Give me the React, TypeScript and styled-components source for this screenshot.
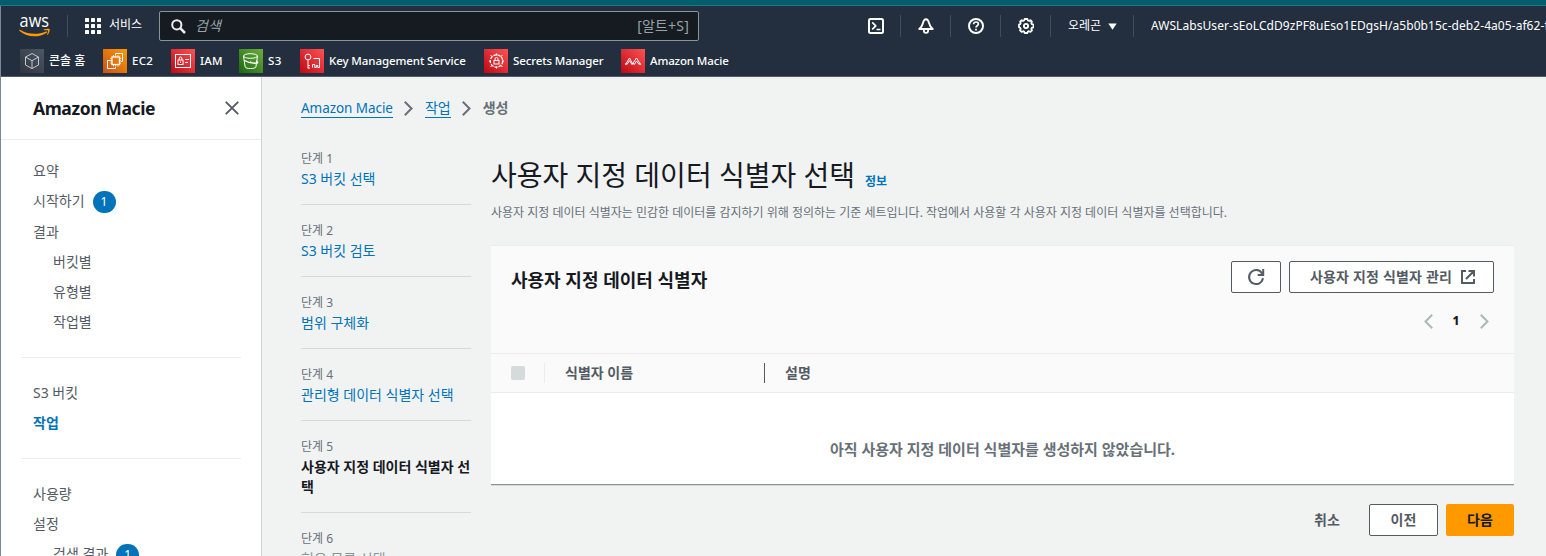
import React from "react";
import styled, { createGlobalStyle } from "styled-components";

const Global = createGlobalStyle`
  * { box-sizing: border-box; }
  html, body { margin: 0; padding: 0; }
  body {
    font-family: "Noto Sans", "Noto Sans CJK KR", sans-serif;
    font-size: 14px;
    line-height: 20px;
    color: #16191f;
    background: #f2f3f3;
    overflow: hidden;
  }
  svg { display: block; flex: none; }
`;

const Page = styled.div`
  width: 1546px;
  height: 556px;
  overflow: hidden;
  display: flex;
  flex-direction: column;
  background: #f1f3f3;
`;
const TopStrip = styled.div`
  flex: none;
  height: 6px;
  background: #055d6e;
  border-bottom: 1px solid #1b7885;
`;
const Frame = styled.div`
  flex: 1;
  min-height: 0;
  display: flex;
  flex-direction: column;
  border-left: 1px solid #7d8998;
`;

const Header = styled.header`
  flex: none;
  height: 71px;
  background: #232f3e;
  border-bottom: 1px solid #545b68;
  color: #fff;
`;
const NavRow = styled.div`
  display: flex;
  align-items: center;
  height: 40px;
  padding-left: 18px;
`;
const VRule = styled.span<{ $l?: number; $r?: number }>`
  flex: none;
  width: 1px;
  height: 22px;
  margin-left: ${(p) => p.$l ?? 0}px;
  margin-right: ${(p) => p.$r ?? 0}px;
  background: #414d5c;
`;
const Services = styled.span`
  display: flex;
  align-items: center;
  gap: 8px;
  width: 74px;
  font-size: 12px;
  white-space: nowrap;
  line-height: 18px;
`;
const ServicesText = styled.span`
  padding-bottom: 2px;
`;
const Search = styled.div`
  flex: none;
  display: flex;
  align-items: center;
  width: 540px;
  height: 30px;
  padding: 0 9px 0 11px;
  border: 1px solid #879596;
  border-radius: 2px;
  background: #161a21;
  color: #95a5a6;
`;
const Placeholder = styled.span`
  flex: 1;
  margin-left: 9px;
  font-style: italic;
`;
const Shortcut = styled.span`
  letter-spacing: 0.2px;
`;
const Tools = styled.div`
  flex: none;
  display: flex;
  align-items: center;
  margin-left: 152px;
`;
const Tool = styled.span`
  display: flex;
  justify-content: center;
  width: 49px;
`;
const Region = styled.span`
  display: flex;
  align-items: center;
  gap: 7px;
  margin-left: 17px;
  width: 65px;
  font-size: 12px;
  white-space: nowrap;
`;
const Account = styled.span`
  flex: 1;
  min-width: 0;
  overflow: hidden;
  white-space: nowrap;
  font-size: 12px;
  letter-spacing: 0.06px;
`;
const Favorites = styled.div`
  display: flex;
  align-items: center;
  height: 30px;
  padding-left: 19px;
`;
const Favorite = styled.div<{ $w: number; $ls?: number; $size?: number }>`
  flex: none;
  display: flex;
  align-items: center;
  gap: 5px;
  width: ${(p) => p.$w}px;
  font-size: ${(p) => p.$size ?? 11.5}px;
  font-weight: 500;
  white-space: nowrap;
  letter-spacing: ${(p) => p.$ls ?? 0}px;
`;

const Body = styled.div`
  flex: 1;
  min-height: 0;
  display: flex;
`;
const Sidebar = styled.aside`
  flex: none;
  width: 261px;
  background: #fff;
  border-right: 1px solid #d0d4d5;
  overflow: hidden;
`;
const SideHead = styled.div`
  display: flex;
  align-items: center;
  justify-content: space-between;
  height: 63px;
  padding: 0 22px 0 32px;
  border-bottom: 1px solid #eaeded;
  font-size: 17.5px;
  font-weight: 700;
`;
const SideTitle = styled.span`
  letter-spacing: -0.4px;
`;
const SideGroup = styled.div`
  margin: 0 20px;
  padding: 20px 0 20px 12px;
  border-bottom: 1px solid #eaeded;
  ${SideHead} + & { padding-top: 16px; }
`;
const SideItem = styled.div<{ $nested?: boolean; $active?: boolean; $badged?: boolean }>`
  display: flex;
  align-items: center;
  gap: 8px;
  height: 30px;
  margin-bottom: ${(p) => (p.$badged ? 1 : 0)}px;
  padding-left: ${(p) => (p.$nested ? 20 : 0)}px;
  color: ${(p) => (p.$active ? "#0073bb" : "#545b64")};
  font-weight: ${(p) => (p.$active ? 700 : 400)};
`;
const Badge = styled.span`
  display: flex;
  align-items: center;
  justify-content: center;
  width: 23px;
  height: 22px;
  margin-top: 2px;
  border-radius: 11px;
  background: #0073bb;
  color: #fff;
  font-size: 12px;
`;

const Content = styled.main`
  flex: 1;
  min-width: 0;
  padding: 21px 32px 0 39px;
`;
const Crumbs = styled.nav`
  display: flex;
  align-items: center;
  height: 20px;
`;
const CrumbLink = styled.a<{ $latin?: boolean }>`
  color: #0073bb;
  padding-top: ${(p) => (p.$latin ? 2 : 0)}px;
  line-height: ${(p) => (p.$latin ? 17 : 19)}px;
  border-bottom: 1px solid #0073bb;
  font-size: ${(p) => (p.$latin ? 13.5 : 14)}px;
  letter-spacing: ${(p) => (p.$latin ? -0.06 : 0)}px;
`;
const CrumbSep = styled.span`
  display: flex;
  justify-content: center;
  width: 32px;
`;
const CrumbCurrent = styled.span`
  color: #687078;
  font-weight: 700;
`;
const Columns = styled.div`
  display: flex;
  gap: 20px;
  margin-top: 15px;
`;
const Steps = styled.div`
  flex: none;
  width: 170px;
`;
const Step = styled.div`
  padding: 16px 0 15px;
  border-bottom: 1px solid #d5dbdb;
`;
const StepLabel = styled.div`
  font-size: 12px;
  line-height: 20px;
  color: #687078;
`;
const StepName = styled.div<{ $state: "link" | "active" | "disabled" }>`
  line-height: 20px;
  word-break: break-all;
  color: ${(p) => ({ link: "#0073bb", active: "#16191f", disabled: "#879596" })[p.$state]};
  font-weight: ${(p) => (p.$state === "active" ? 700 : 400)};
`;
const Wizard = styled.section`
  flex: 1;
  min-width: 0;
`;
const TitleRow = styled.div`
  display: flex;
  align-items: baseline;
  gap: 10px;
  margin-top: 24px;
  height: 36px;
`;
const Title = styled.h1`
  margin: 0;
  font-size: 28px;
  font-weight: 400;
  line-height: 36px;
`;
const Info = styled.a`
  font-size: 12px;
  font-weight: 700;
  color: #0073bb;
`;
const Description = styled.p`
  margin: 10px 0 22px;
  font-size: 12px;
  line-height: 20px;
  color: #687078;
  white-space: nowrap;
`;
const Panel = styled.div`
  height: 240px;
  display: flex;
  flex-direction: column;
  background: #fff;
  border-top: 1px solid #eaeded;
  border-bottom: 1px solid #879596;
  box-shadow: 0 1px 0 #d5dbdb;
`;
const PanelHead = styled.div`
  flex: none;
  height: 107px;
  padding: 15px 20px 0;
  background: #fafafa;
`;
const PanelTop = styled.div`
  display: flex;
  align-items: center;
  gap: 8px;
  height: 32px;
`;
const PanelTitle = styled.h2`
  flex: 1;
  margin: 0;
  padding-top: 6px;
  font-size: 18px;
  line-height: 22px;
  font-weight: 700;
`;
const Button = styled.button<{ $w: number; $kind?: "normal" | "primary" | "link" }>`
  display: flex;
  align-items: center;
  justify-content: center;
  gap: 9px;
  width: ${(p) => p.$w}px;
  height: 32px;
  padding: 0;
  font: inherit;
  font-weight: 700;
  white-space: nowrap;
  border-radius: 2px;
  border: 1px solid ${(p) => (p.$kind === "primary" ? "#ff9900" : p.$kind === "link" ? "transparent" : "#545b64")};
  background: ${(p) => (p.$kind === "primary" ? "#ff9900" : p.$kind === "link" ? "transparent" : "#fff")};
  color: ${(p) => (p.$kind === "primary" ? "#16191f" : "#545b64")};
`;
const ManageButton = styled(Button)`
  padding-left: 2px;
  letter-spacing: 0.18px;
`;
const Pager = styled.div`
  display: flex;
  align-items: center;
  justify-content: flex-end;
  gap: 20px;
  height: 20px;
  margin-top: 18px;
  padding-right: 5.5px;
  font-size: 12px;
  font-weight: 800;
`;
const TableHead = styled.div`
  flex: none;
  display: flex;
  align-items: center;
  height: 40px;
  padding-left: 20px;
  background: #fafafa;
  border-top: 1px solid #eaeded;
  border-bottom: 1px solid #eaeded;
  color: #545b64;
  font-weight: 700;
`;
const Checkbox = styled.span`
  width: 14px;
  height: 14px;
  margin-right: 19px;
  border-radius: 2px;
  background: #d5dbdb;
`;
const HeadCell = styled.span<{ $w?: number; $line: string }>`
  display: flex;
  align-items: center;
  height: 20px;
  width: ${(p) => (p.$w ? p.$w + "px" : "auto")};
  padding-left: 20px;
  border-left: 1px solid ${(p) => p.$line};
`;
const Empty = styled.div`
  flex: 1;
  display: flex;
  align-items: center;
  justify-content: center;
  padding-top: 21px;
  font-size: 15px;
  color: #687078;
  font-weight: 700;
`;
const Actions = styled.div`
  display: flex;
  justify-content: flex-end;
  gap: 8px;
  margin-top: 19px;
`;

const AwsLogo = () => (
  <svg width="32" height="24" viewBox="0 0 32 24" overflow="visible">
    <text x="0.6" y="13.4" textLength="29.4" lengthAdjust="spacingAndGlyphs" fontFamily="Open Sans" fontSize="17.5" fontWeight="500" fill="#fff">aws</text>
    <path d="M.3 16.1c.3-.5.7-.4 1.1-.1 8.2 4.7 17.500 4.900 25.700 1.500 1-.4 1.700.500.700 1.200-7.600 5.200-20 5-27.200-1.700-.2-.3-.4-.6-.3-.9z" fill="#f90" />
    <path d="M24.700 15.600c2-1.200 5.300-1.200 5.900-.5.600.800-.2 4.200-2 5.800-.4.300-.7.100-.5-.3.500-1.300 1.200-3.400.8-4-.5-.6-2.700-.4-3.900-.3-.5.100-.6-.4-.3-.7z" fill="#f90" />
  </svg>
);
const GridIcon = () => (
  <svg width="16" height="16" viewBox="0 0 16 16" fill="#fff">
    {[0, 6, 12].map((y) => [0, 6, 12].map((x) => <rect key={x + "-" + y} x={x} y={y} width="4" height="4" rx=".6" />))}
  </svg>
);
const SearchIcon = () => (
  <svg width="15" height="15" viewBox="0 0 15 15" fill="none" stroke="#eaeded" strokeWidth="2">
    <circle cx="5.800" cy="5.800" r="4.600" />
    <path d="M9.200 9.200l4.800 4.800" strokeWidth="2.500" />
  </svg>
);
const line = { fill: "none", stroke: "#fff", strokeWidth: 2, strokeLinejoin: "round" as const };
const ShellIcon = () => (
  <svg width="16" height="16" viewBox="0 0 16 16" {...line}>
    <rect x="1" y="1" width="14" height="14" rx="1.500" />
    <path d="M4.200 4.400l3.600 3.500-3.600 3.500M8.500 11.500h4" strokeWidth="1.700" />
  </svg>
);
const BellIcon = () => (
  <svg width="16" height="16" viewBox="0 0 16 16" {...line}>
    <path d="M8 1.200C6 1.200 5.400 3 4.900 5.200 4.400 7.500 3.300 9.100 1.300 11h13.400c-2-1.900-3.100-3.500-3.600-5.800C10.600 3 10 1.200 8 1.200z" strokeWidth="1.900" />
    <path d="M5.900 11.200v1.500a2.100 2.100 0 0 0 4.200 0v-1.500" strokeWidth="1.800" />
  </svg>
);
const HelpIcon = () => (
  <svg width="16" height="16" viewBox="0 0 16 16" {...line}>
    <circle cx="8" cy="8" r="7" />
    <path d="M5.600 6.300C5.600 4.700 6.600 4 8 4s2.400.8 2.400 2c0 1.700-2.400 1.700-2.400 3.500M8 10.800v1.700" strokeWidth="1.700" />
  </svg>
);
const GearIcon = () => (
  <svg width="16" height="16" viewBox="0 0 16 16" {...line}>
    <path d="M6.600 1h2.800l.5 1.500 1 .4 1.500-.7 1.500 1.500-.6 1.400.5 1.100 1.700.5v2.600l-1.700.6-.5 1 .7 1.500-1.600 1.500-1.500-.7-1 .4L9.400 15H6.600l-.5-1.400-1-.4-1.500.7L2 12.400l.7-1.500-.5-1L1 9.300V6.700l1.200-.5.5-1.100L2.100 3.700l1.500-1.500 1.500.7 1-.4z" strokeWidth="1.800" />
    <circle cx="8" cy="8" r="2.100" strokeWidth="1.900" />
  </svg>
);
const Caret = () => (
  <svg width="9" height="7" viewBox="0 0 9 7"><path d="M.3.500h8.400L4.500 6.800z" fill="#fff" /></svg>
);

type TileKind = "home" | "ec2" | "iam" | "s3" | "kms" | "secrets" | "macie";
const tileColors: Record<TileKind, [string, string]> = {
  home: ["#30353d", "#4d5766"],
  ec2: ["#c8511b", "#ff9900"],
  iam: ["#bd0816", "#ff5252"],
  s3: ["#1b660f", "#6cae3e"],
  kms: ["#bd0816", "#ff5252"],
  secrets: ["#bd0816", "#ff5252"],
  macie: ["#bd0816", "#ff5252"],
};
const tileArt: Record<TileKind, React.ReactNode> = {
  home: <path d="M12 4.500l6.500 3.500v8L12 19.600 5.500 16V8zM5.500 8l6.500 3.700L18.500 8M12 11.700v7.900" stroke="#c3c8cf" />,
  ec2: (
    <>
      <rect x="9" y="8" width="7.500" height="7.500" strokeWidth="1.300" />
      <path d="M10.500 6v2M12.700 6v2M15 6v2M10.500 15.500v2M12.700 15.500v2M15 15.500v2M7.200 9.500H9M7.200 11.700H9M7.200 14H9M16.500 9.500h1.700M16.500 11.700h1.700M16.500 14h1.700" strokeWidth=".8" />
      <path d="M12.500 6V4.500h7v8H18M7.500 11.500h-3v8h8V18" />
    </>
  ),
  iam: (
    <>
      <rect x="4.500" y="5.500" width="15" height="13" />
      <rect x="7" y="11" width="5" height="4.500" />
      <path d="M8.200 11V9.300a1.300 1.300 0 0 1 2.600 0V11M9.500 12.500v1.500M14 10.500h4M14 13.500h3" />
    </>
  ),
  s3: (
    <>
      <ellipse cx="11.500" cy="7" rx="7" ry="2.300" />
      <path d="M4.500 7l1.700 11c.3 2 10.300 2 10.700 0l1.600-11" />
      <path d="M5.500 11.500c3 1.800 7 3 12 2.700 2 0 1.200-1.500-.1-2.500M11.500 12.300l.5.500" strokeWidth="1.300" />
    </>
  ),
  kms: (
    <>
      <circle cx="8" cy="8" r="2.900" />
      <path d="M8 11v8.500M8 19h2M8 16.500h2M13.500 9.500h6v9h-1.700v-2h-1.500v2h-1.500v-3h-2.300v3" />
    </>
  ),
  secrets: (
    <>
      <circle cx="12.500" cy="12" r="6.200" strokeDasharray="3.200 1" strokeWidth="1.300" />
      <rect x="10" y="11.500" width="5" height="3.500" />
      <path d="M11 11.500V10a1.500 1.500 0 0 1 3 0v1.500M12.500 4.500v2M12.500 17.500v2M5 12h2M18 12h2M6.500 6l2 2M18.500 6l-2 2M6.500 18l2-2M18.500 18l-2-2" />
    </>
  ),
  macie: <path d="M4.500 15.500l4-6.500 3.500 6.500M6 15.500l2.500-3.800L11 15.500l4.500-6.500 4 6.500M13.300 15.500l2.200-3.500 2.500 3.500M4 15h2M18 15h2M12 14.200l1.500 1.300" />,
};
const Tile = ({ kind }: { kind: TileKind }) => (
  <svg width="24" height="24" viewBox="0 0 24 24" fill="none" stroke="#fff" strokeWidth="1">
    <defs>
      <linearGradient id={"tile-" + kind} x1="0" y1="1" x2="1" y2="0">
        <stop offset="0" stopColor={tileColors[kind][0]} />
        <stop offset="1" stopColor={tileColors[kind][1]} />
      </linearGradient>
    </defs>
    <rect width="24" height="24" fill={`url(#tile-${kind})`} stroke="none" />
    {tileArt[kind]}
  </svg>
);

const CloseIcon = () => (
  <svg width="14" height="14" viewBox="0 0 14 14" stroke="#545b64" strokeWidth="1.900"><path d="M.8.800l12.400 12.400M13.200.800L.8 13.200" /></svg>
);
const Chevron = ({ left, color }: { left?: boolean; color: string }) => (
  <svg width="9" height="15" viewBox="0 0 9 15" fill="none" stroke={color} strokeWidth="2">
    <path d={left ? "M8.200.800L1.500 7.500l6.700 6.700" : "M.8.800l6.700 6.700L.8 14.200"} />
  </svg>
);
const RefreshIcon = () => (
  <svg width="18" height="18" viewBox="0 0 18 18" fill="none" stroke="#545b64" strokeWidth="2">
    <path d="M16 10.200A7 7 0 1 1 15 5.300L16 6.800" />
    <path d="M16.200 1v6H10.700" />
  </svg>
);
const ExternalIcon = () => (
  <svg width="14" height="14" viewBox="0 0 14 14" fill="none" stroke="#545b64" strokeWidth="2">
    <path d="M5 1H1v12h12V9M7.500 1H13v5.500M13 1L5 9" />
  </svg>
);

const favorites: { kind: TileKind; label: string; w: number; ls?: number; size?: number }[] = [
  { kind: "home", label: "콘솔 홈", w: 83, size: 12 },
  { kind: "ec2", label: "EC2", w: 68, ls: 0.25 },
  { kind: "iam", label: "IAM", w: 68, ls: 0.25 },
  { kind: "s3", label: "S3", w: 61, ls: 0.5 },
  { kind: "kms", label: "Key Management Service", w: 184, ls: -0.09 },
  { kind: "secrets", label: "Secrets Manager", w: 137, ls: -0.13 },
  { kind: "macie", label: "Amazon Macie", w: 120, ls: -0.13 },
];

const steps: { name: string; state: "link" | "active" | "disabled" }[] = [
  { name: "S3 버킷 선택", state: "link" },
  { name: "S3 버킷 검토", state: "link" },
  { name: "범위 구체화", state: "link" },
  { name: "관리형 데이터 식별자 선택", state: "link" },
  { name: "사용자 지정 데이터 식별자 선택", state: "active" },
  { name: "허용 목록 선택", state: "disabled" },
];

export default function App() {
  return (
    <Page>
      <Global />
      <TopStrip />
      <Frame>
        <Header>
          <NavRow>
            <AwsLogo />
            <VRule $l={16} $r={17} />
            <Services><GridIcon /><ServicesText>서비스</ServicesText></Services>
            <Search>
              <SearchIcon />
              <Placeholder>검색</Placeholder>
              <Shortcut>[알트+S]</Shortcut>
            </Search>
            <Tools>
              <Tool><ShellIcon /></Tool>
              <VRule />
              <Tool><BellIcon /></Tool>
              <VRule />
              <Tool><HelpIcon /></Tool>
              <VRule />
              <Tool><GearIcon /></Tool>
              <VRule />
              <Region>오레곤<Caret /></Region>
              <VRule $r={17} />
            </Tools>
            <Account>AWSLabsUser-sEoLCdD9zPF8uEso1EDgsH/a5b0b15c-deb2-4a05-af62-f</Account>
          </NavRow>
          <Favorites>
            {favorites.map((f) => (
              <Favorite key={f.kind} $w={f.w} $ls={f.ls} $size={f.size}><Tile kind={f.kind} />{f.label}</Favorite>
            ))}
          </Favorites>
        </Header>
        <Body>
          <Sidebar>
            <SideHead><SideTitle>Amazon Macie</SideTitle><CloseIcon /></SideHead>
            <SideGroup>
              <SideItem>요약</SideItem>
              <SideItem $badged>시작하기<Badge>1</Badge></SideItem>
              <SideItem>결과</SideItem>
              <SideItem $nested>버킷별</SideItem>
              <SideItem $nested>유형별</SideItem>
              <SideItem $nested>작업별</SideItem>
            </SideGroup>
            <SideGroup>
              <SideItem>S3 버킷</SideItem>
              <SideItem $active>작업</SideItem>
            </SideGroup>
            <SideGroup>
              <SideItem>사용량</SideItem>
              <SideItem>설정</SideItem>
              <SideItem $nested $badged>검색 결과<Badge>1</Badge></SideItem>
            </SideGroup>
          </Sidebar>
          <Content>
            <Crumbs>
              <CrumbLink $latin>Amazon Macie</CrumbLink>
              <CrumbSep><Chevron color="#687078" /></CrumbSep>
              <CrumbLink>작업</CrumbLink>
              <CrumbSep><Chevron color="#687078" /></CrumbSep>
              <CrumbCurrent>생성</CrumbCurrent>
            </Crumbs>
            <Columns>
              <Steps>
                {steps.map((s, i) => (
                  <Step key={s.name}>
                    <StepLabel>단계 {i + 1}</StepLabel>
                    <StepName $state={s.state}>{s.name}</StepName>
                  </Step>
                ))}
              </Steps>
              <Wizard>
                <TitleRow><Title>사용자 지정 데이터 식별자 선택</Title><Info>정보</Info></TitleRow>
                <Description>사용자 지정 데이터 식별자는 민감한 데이터를 감지하기 위해 정의하는 기준 세트입니다. 작업에서 사용할 각 사용자 지정 데이터 식별자를 선택합니다.</Description>
                <Panel>
                  <PanelHead>
                    <PanelTop>
                      <PanelTitle>사용자 지정 데이터 식별자</PanelTitle>
                      <Button $w={50}><RefreshIcon /></Button>
                      <ManageButton $w={205}>사용자 지정 식별자 관리<ExternalIcon /></ManageButton>
                    </PanelTop>
                    <Pager><Chevron left color="#aab7b8" /><span>1</span><Chevron color="#aab7b8" /></Pager>
                  </PanelHead>
                  <TableHead>
                    <Checkbox />
                    <HeadCell $w={220} $line="#eaeded">식별자 이름</HeadCell>
                    <HeadCell $line="#545b64">설명</HeadCell>
                  </TableHead>
                  <Empty>아직 사용자 지정 데이터 식별자를 생성하지 않았습니다.</Empty>
                </Panel>
                <Actions>
                  <Button $w={68} $kind="link">취소</Button>
                  <Button $w={69}>이전</Button>
                  <Button $w={68} $kind="primary">다음</Button>
                </Actions>
              </Wizard>
            </Columns>
          </Content>
        </Body>
      </Frame>
    </Page>
  );
}
